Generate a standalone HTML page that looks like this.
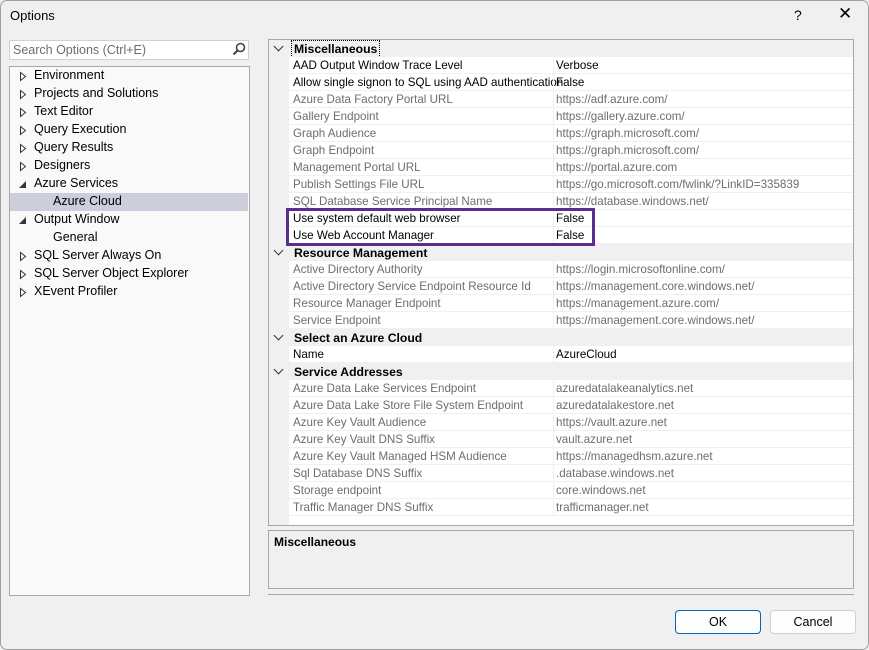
<!DOCTYPE html>
<html><head><style>
*{margin:0;padding:0;box-sizing:border-box}
body{width:869px;height:650px;background:#f0f0f0;font-family:"Liberation Sans",sans-serif;font-size:12px;color:#000;position:relative;overflow:hidden}
.a{position:absolute}
#win{position:absolute;left:0;top:0;width:869px;height:650px;border:1px solid #a0a0a0;border-radius:7px;background:#f0f0f0}
.tr{position:absolute;left:34px;height:18px;line-height:19px;font-size:12.5px;white-space:nowrap}
.r{position:absolute;left:289px;width:564px;height:17px;line-height:18px;border-bottom:1px solid #eef0f4;background:#fff;white-space:nowrap;font-size:11.6px}
.r span{position:absolute}
.r .n{left:4px}.r .v{left:267px}
.r .sep{position:absolute;left:264px;top:0;width:1px;height:17px;background:#eef0f4}
.g{color:#6d6d6d}
.h{position:absolute;left:269px;width:584px;height:17px;line-height:18px;font-weight:bold;font-size:12.2px;background:#f0f0f0}
.h span{position:absolute;left:25px}
.chev{position:absolute;left:6px;top:3px;width:7px;height:7px;border-right:1.5px solid #333;border-bottom:1.5px solid #333;transform:rotate(45deg)}
</style></head><body>
<div id="win"></div>
<div class="a" style="left:10px;top:8px;font-size:13px">Options</div>
<div class="a" style="left:794px;top:7px;font-size:14px">?</div>
<div class="a" style="left:838px;top:4px;font-size:17px;font-weight:300">✕</div>

<div class="a" style="left:9px;top:40px;width:240px;height:20px;background:#fff;border:1px solid #d0d0d0"></div>
<div class="a" style="left:13px;top:43px;color:#6d6d6d;font-size:12.5px">Search Options (Ctrl+E)</div>
<svg class="a" style="left:232px;top:42px" width="14" height="14"><circle cx="8.5" cy="5.5" r="4" fill="none" stroke="#444" stroke-width="1.6"/><line x1="5.5" y1="8.5" x2="1.5" y2="12.5" stroke="#444" stroke-width="2"/></svg>

<div class="a" style="left:9px;top:66px;width:241px;height:530px;background:#f9f9f9;border:1px solid #a8a8a8"></div>
<div class="a" style="left:10px;top:193px;width:238px;height:18px;background:#cccedb"></div>
<div class="tr" style="top:66px">Environment</div>
<div class="tr" style="top:84px">Projects and Solutions</div>
<div class="tr" style="top:102px">Text Editor</div>
<div class="tr" style="top:120px">Query Execution</div>
<div class="tr" style="top:138px">Query Results</div>
<div class="tr" style="top:156px">Designers</div>
<div class="tr" style="top:174px">Azure Services</div>
<div class="tr" style="top:192px;left:53px">Azure Cloud</div>
<div class="tr" style="top:210px">Output Window</div>
<div class="tr" style="top:228px;left:53px">General</div>
<div class="tr" style="top:246px">SQL Server Always On</div>
<div class="tr" style="top:264px">SQL Server Object Explorer</div>
<div class="tr" style="top:282px">XEvent Profiler</div>
<svg class="a" style="left:18px;top:67px" width="12" height="240">
<g fill="none" stroke="#333" stroke-width="1">
<path d="M2.5 5.5 L7.5 9.5 L2.5 13.5Z"/>
<path d="M2.5 23.5 L7.5 27.5 L2.5 31.5Z"/>
<path d="M2.5 41.5 L7.5 45.5 L2.5 49.5Z"/>
<path d="M2.5 59.5 L7.5 63.5 L2.5 67.5Z"/>
<path d="M2.5 77.5 L7.5 81.5 L2.5 85.5Z"/>
<path d="M2.5 95.5 L7.5 99.5 L2.5 103.5Z"/>
<path d="M2.5 185.5 L7.5 189.5 L2.5 193.5Z"/>
<path d="M2.5 203.5 L7.5 207.5 L2.5 211.5Z"/>
<path d="M2.5 221.5 L7.5 225.5 L2.5 229.5Z"/>
</g>
<path d="M8 114 L8 121 L1 121Z" fill="#333"/>
<path d="M8 150 L8 157 L1 157Z" fill="#333"/>
</svg>

<div class="a" style="left:268px;top:39px;width:586px;height:487px;background:#fff;border:1px solid #a8a8a8"></div>
<div class="a" style="left:269px;top:40px;width:20px;height:485px;background:#f0f0f0"></div>

<div class="h" style="top:40px"><div class="chev"></div><span style="outline:1px dotted #000;padding:0 2px;left:23px;line-height:16px;top:1px">Miscellaneous</span></div>
<div class="r" style="top:57px"><span class="n">AAD Output Window Trace Level</span><i class="sep"></i><span class="v">Verbose</span></div>
<div class="r" style="top:74px"><span class="n">Allow single signon to SQL using AAD authentication</span><i class="sep"></i><span class="v">False</span></div>
<div class="r g" style="top:91px"><span class="n">Azure Data Factory Portal URL</span><i class="sep"></i><span class="v">https://adf.azure.com/</span></div>
<div class="r g" style="top:108px"><span class="n">Gallery Endpoint</span><i class="sep"></i><span class="v">https://gallery.azure.com/</span></div>
<div class="r g" style="top:125px"><span class="n">Graph Audience</span><i class="sep"></i><span class="v">https://graph.microsoft.com/</span></div>
<div class="r g" style="top:142px"><span class="n">Graph Endpoint</span><i class="sep"></i><span class="v">https://graph.microsoft.com/</span></div>
<div class="r g" style="top:159px"><span class="n">Management Portal URL</span><i class="sep"></i><span class="v">https://portal.azure.com</span></div>
<div class="r g" style="top:176px"><span class="n">Publish Settings File URL</span><i class="sep"></i><span class="v">https://go.microsoft.com/fwlink/?LinkID=335839</span></div>
<div class="r g" style="top:193px"><span class="n">SQL Database Service Principal Name</span><i class="sep"></i><span class="v">https://database.windows.net/</span></div>
<div class="r" style="top:210px"><span class="n">Use system default web browser</span><i class="sep"></i><span class="v">False</span></div>
<div class="r" style="top:227px"><span class="n">Use Web Account Manager</span><i class="sep"></i><span class="v">False</span></div>
<div class="h" style="top:244px"><div class="chev"></div><span>Resource Management</span></div>
<div class="r g" style="top:261px"><span class="n">Active Directory Authority</span><i class="sep"></i><span class="v">https://login.microsoftonline.com/</span></div>
<div class="r g" style="top:278px"><span class="n">Active Directory Service Endpoint Resource Id</span><i class="sep"></i><span class="v">https://management.core.windows.net/</span></div>
<div class="r g" style="top:295px"><span class="n">Resource Manager Endpoint</span><i class="sep"></i><span class="v">https://management.azure.com/</span></div>
<div class="r g" style="top:312px"><span class="n">Service Endpoint</span><i class="sep"></i><span class="v">https://management.core.windows.net/</span></div>
<div class="h" style="top:329px"><div class="chev"></div><span>Select an Azure Cloud</span></div>
<div class="r" style="top:346px"><span class="n">Name</span><i class="sep"></i><span class="v">AzureCloud</span></div>
<div class="h" style="top:363px"><div class="chev"></div><span>Service Addresses</span></div>
<div class="r g" style="top:380px"><span class="n">Azure Data Lake Services Endpoint</span><i class="sep"></i><span class="v">azuredatalakeanalytics.net</span></div>
<div class="r g" style="top:397px"><span class="n">Azure Data Lake Store File System Endpoint</span><i class="sep"></i><span class="v">azuredatalakestore.net</span></div>
<div class="r g" style="top:414px"><span class="n">Azure Key Vault Audience</span><i class="sep"></i><span class="v">https://vault.azure.net</span></div>
<div class="r g" style="top:431px"><span class="n">Azure Key Vault DNS Suffix</span><i class="sep"></i><span class="v">vault.azure.net</span></div>
<div class="r g" style="top:448px"><span class="n">Azure Key Vault Managed HSM Audience</span><i class="sep"></i><span class="v">https://managedhsm.azure.net</span></div>
<div class="r g" style="top:465px"><span class="n">Sql Database DNS Suffix</span><i class="sep"></i><span class="v">.database.windows.net</span></div>
<div class="r g" style="top:482px"><span class="n">Storage endpoint</span><i class="sep"></i><span class="v">core.windows.net</span></div>
<div class="r g" style="top:499px"><span class="n">Traffic Manager DNS Suffix</span><i class="sep"></i><span class="v">trafficmanager.net</span></div>

<div class="a" style="left:286px;top:208px;width:309px;height:38px;border:3px solid #5c2d91"></div>

<div class="a" style="left:268px;top:530px;width:586px;height:59px;border:1px solid #a8a8a8;background:#f0f0f0"></div>
<div class="a" style="left:274px;top:535px;font-weight:bold;font-size:12px">Miscellaneous</div>
<div class="a" style="left:268px;top:594px;width:586px;height:1px;background:#a8a8a8"></div>

<div class="a" style="left:675px;top:610px;width:86px;height:24px;border:1px solid #0067c0;border-radius:4px;background:#fdfdfd;text-align:center;line-height:22px;font-size:12.5px">OK</div>
<div class="a" style="left:770px;top:610px;width:86px;height:24px;border:1px solid #d0d0d0;border-radius:4px;background:#fdfdfd;text-align:center;line-height:22px;font-size:12.5px">Cancel</div>
</body></html>
